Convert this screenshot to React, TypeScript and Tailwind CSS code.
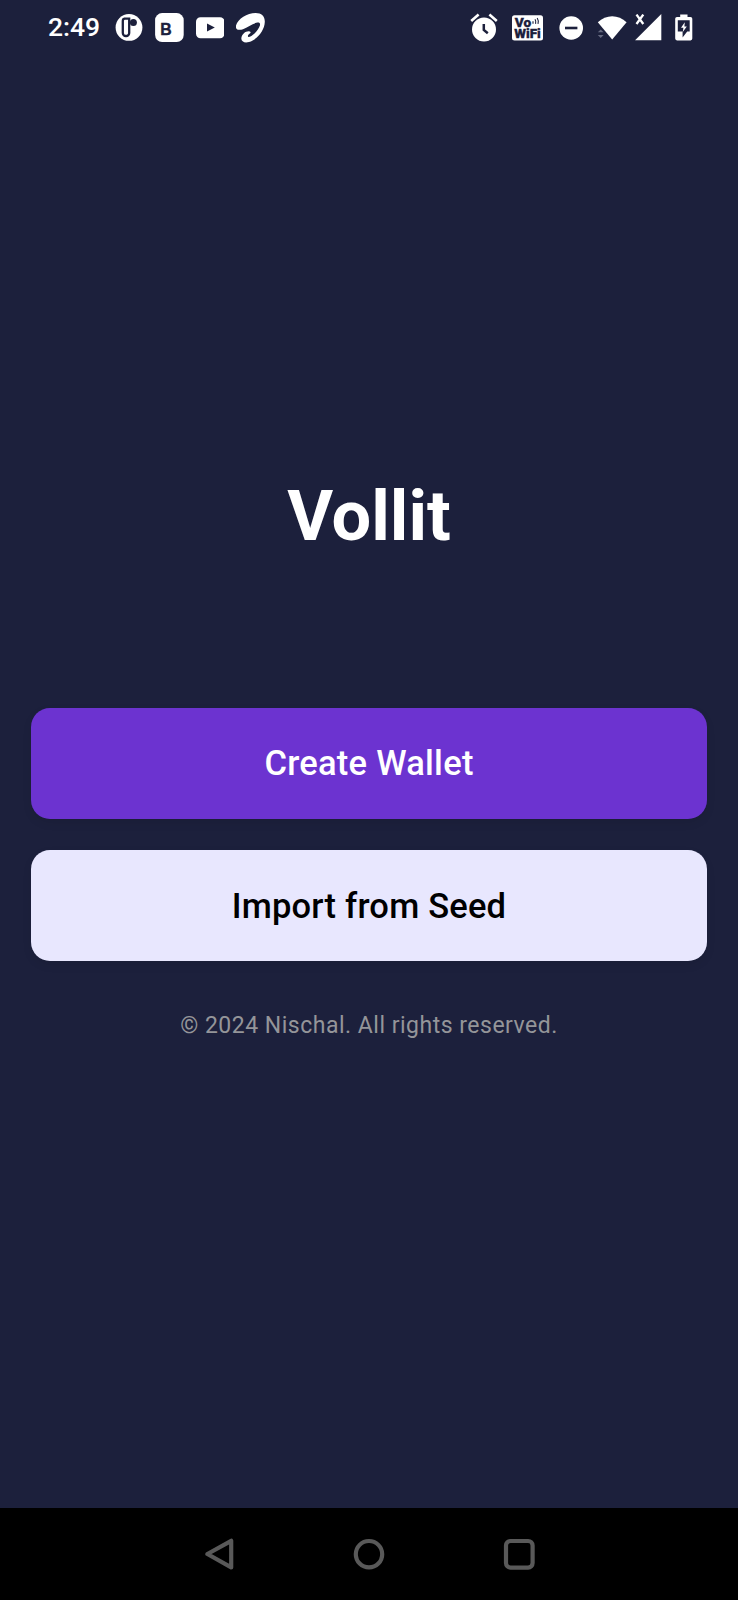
import React from 'react';

function PandoraIcon() {
  return (
    <svg className="ml-[13.5px] h-7 w-7 shrink-0" viewBox="0 0 28 28">
      <circle cx="14" cy="13.4" r="13.4" fill="#fff" />
      <path d="M9 4.7 H14.2 V19 A3 3 0 0 1 11.2 22 H10.8 A3 3 0 0 1 7.8 19 V7 Q7.8 4.7 10 4.7 Z" fill="#fff" stroke="#1c203c" strokeWidth="2.3" />
      <circle cx="18.4" cy="8.4" r="3.5" fill="#1c203c" />
    </svg>
  );
}

function LetterIcon() {
  return (
    <svg className="ml-3 h-[30px] w-[29px] shrink-0" viewBox="0 0 29 30">
      <rect x="0.1" y="0.1" width="28.6" height="29" rx="7" fill="#fff" />
      <text x="5.3" y="22.4" fontFamily="Liberation Sans, sans-serif" fontWeight="700" fontSize="15.8" fill="#1c203c" stroke="#1c203c" strokeWidth="0.4">
        B
      </text>
    </svg>
  );
}

function YoutubeIcon() {
  return (
    <svg className="ml-3 h-6 w-[28.5px] shrink-0" viewBox="0 0 28.5 24">
      <rect x="0" y="1.2" width="28.5" height="21" rx="4.5" fill="#fff" />
      <path d="M11 7.6 L18.8 11.6 L11 15.6 Z" fill="#1c203c" />
    </svg>
  );
}

function SwooshIcon() {
  return (
    <svg className="ml-[11.5px] h-[30px] w-[29px] shrink-0" viewBox="0 0 29 30">
      <path
        d="M0 12.6 C2 5.6 11 0 19.6 0 C25.8 0 29 3.5 28.8 9 C28.5 17 22 26 13 29 C8.6 30.4 4.8 28.6 5.4 24.8 C6 21 9.4 18 13 18.2 C15.4 18.5 14.8 20.2 13.2 21 C11.4 22 11.4 24.6 13.8 23.8 C18 22.2 22.8 16.4 23.9 12.6 C24.6 9.8 23 9.2 20.3 9.8 C15.8 11 11.4 14.6 7 16.2 C2.4 17.8 -0.8 16.4 0 12.6 Z"
        fill="#fff"
      />
    </svg>
  );
}

function AlarmIcon() {
  return (
    <svg className="h-[30px] w-7 shrink-0" viewBox="0 0 28 30">
      <circle cx="14" cy="16.5" r="12" fill="#fff" />
      <path d="M1.2 8 L8.6 1.6 M26.8 8 L19.4 1.6" stroke="#fff" strokeWidth="2.6" />
      <path d="M13.8 11 V17 L17.8 20.2" fill="none" stroke="#1c203c" strokeWidth="2.5" />
    </svg>
  );
}

function VoWifiIcon() {
  return (
    <svg className="ml-3.5 h-[26px] w-[31px] shrink-0" viewBox="0 0 31 26">
      <rect x="0" y="0.2" width="31" height="25.2" rx="2.5" fill="#fff" />
      <g fontFamily="Roboto, sans-serif" fontWeight="900" fill="#1c203c" stroke="#1c203c" strokeWidth="0.3">
        <text x="2.8" y="12" fontSize="12.4" textLength="16.5" lengthAdjust="spacingAndGlyphs">
          Vo
        </text>
        <text x="2.2" y="22.8" fontSize="12.4" textLength="26.6" lengthAdjust="spacingAndGlyphs">
          WiFi
        </text>
      </g>
      <path d="M21 6.2 V8.8 M23 4.2 Q24.2 6 23.6 8.8 M25.2 3 Q26.8 5.4 26 8.8" fill="none" stroke="#1c203c" strokeWidth="1.1" />
    </svg>
  );
}

function DndIcon() {
  return (
    <svg className="ml-4 h-6 w-6 shrink-0" viewBox="0 0 24 24">
      <circle cx="12.2" cy="12" r="11.8" fill="#fff" />
      <path d="M6 12 H18.4" stroke="#1c203c" strokeWidth="2.6" />
    </svg>
  );
}

function WifiIcon() {
  return (
    <svg className="ml-3.5 h-7 w-[30px] shrink-0" viewBox="0 0 30 28">
      <path d="M0.8 8.2 C9 0.2 21.4 0.2 29.6 8.2 L15.2 25.6 Z" fill="#fff" />
      <path d="M0.8 18.2 L3.7 15.4 L6.6 18.2 Z M0.8 21 L3.7 23.9 L6.6 21 Z" fill="#666a80" />
    </svg>
  );
}

function SignalIcon() {
  return (
    <svg className="ml-2 h-7 w-[27px] shrink-0" viewBox="0 0 27 28">
      <path d="M26.3 0 V26.2 H0.1 Z" fill="#fff" />
      <path d="M1.5 0.6 L8.3 10 M8.3 0.6 L1.5 10" stroke="#fff" strokeWidth="2.3" />
    </svg>
  );
}

function BatteryIcon() {
  return (
    <svg className="ml-[13px] h-7 w-[18px] shrink-0" viewBox="0 0 18 28">
      <path d="M5.2 0.4 H12.5 V3 H15.5 Q17.3 3 17.3 4.8 V24.6 Q17.3 26.4 15.5 26.4 H2 Q0.2 26.4 0.2 24.6 V4.8 Q0.2 3 2 3 H5.2 Z" fill="#fff" />
      <path d="M2.8 6.2 H14.7 V17.4 H12.2 L7.6 23.6 V17.4 H2.8 Z" fill="#1c203c" />
      <path d="M9.8 8.2 L6 13.8 H8.4 L7.8 18 L11.8 12.4 H9.4 Z" fill="#fff" />
    </svg>
  );
}

function StatusBar() {
  return (
    <header className="flex h-14 items-center justify-between pr-[45px] pl-[48px]">
      <div className="flex h-14 items-center">
        <span className="w-[53px] pb-[2px] text-[26.5px] leading-none font-medium whitespace-nowrap">2:49</span>
        <PandoraIcon />
        <LetterIcon />
        <YoutubeIcon />
        <SwooshIcon />
      </div>
      <div className="flex h-14 items-center">
        <AlarmIcon />
        <VoWifiIcon />
        <DndIcon />
        <WifiIcon />
        <SignalIcon />
        <BatteryIcon />
      </div>
    </header>
  );
}

function NavigationBar() {
  return (
    <nav className="flex h-[92px] items-center justify-center gap-[118px] bg-black">
      <button aria-label="Back" className="h-8 w-8">
        <svg viewBox="0 0 32 32" fill="none" stroke="#595959" strokeWidth="4.2" strokeLinejoin="round">
          <path d="M4.4 16 L28.2 2.8 V29.4 Z" />
        </svg>
      </button>
      <button aria-label="Home" className="h-8 w-8">
        <svg viewBox="0 0 32 32" fill="none" stroke="#595959" strokeWidth="4.2">
          <circle cx="16" cy="16.2" r="13.2" />
        </svg>
      </button>
      <button aria-label="Recent apps" className="h-8 w-8">
        <svg viewBox="0 0 32 32" fill="none" stroke="#595959" strokeWidth="4.2">
          <rect x="3" y="3" width="26.6" height="26.6" rx="4.5" />
        </svg>
      </button>
    </nav>
  );
}

export default function App() {
  return (
    <div className="flex h-[1600px] w-[738px] flex-col overflow-hidden bg-[#1c203c] font-[Roboto,sans-serif] text-white">
      <StatusBar />
      <main className="flex flex-1 flex-col items-center px-[31px] pt-[419px]">
        <h1 className="text-[70.3px] leading-[82px] font-bold">Vollit</h1>
        <div className="mt-[151px] flex w-full flex-col gap-[31px]">
          <button className="h-[111px] rounded-[19px] bg-[#6c33d0] text-[34.5px] font-medium tracking-[0.25px] shadow-[0_4px_10px_rgba(0,0,0,0.08)]">
            Create Wallet
          </button>
          <button className="h-[111px] rounded-[19px] bg-[#e8e7fe] pt-[2px] text-[34.5px] font-medium tracking-[0.2px] text-black shadow-[0_4px_10px_rgba(0,0,0,0.08)]">
            Import from Seed
          </button>
        </div>
        <p className="mt-[51px] text-[23px] leading-[28px] tracking-[0.5px] text-[#949599]">
          © 2024 Nischal. All rights reserved.
        </p>
      </main>
      <NavigationBar />
    </div>
  );
}
